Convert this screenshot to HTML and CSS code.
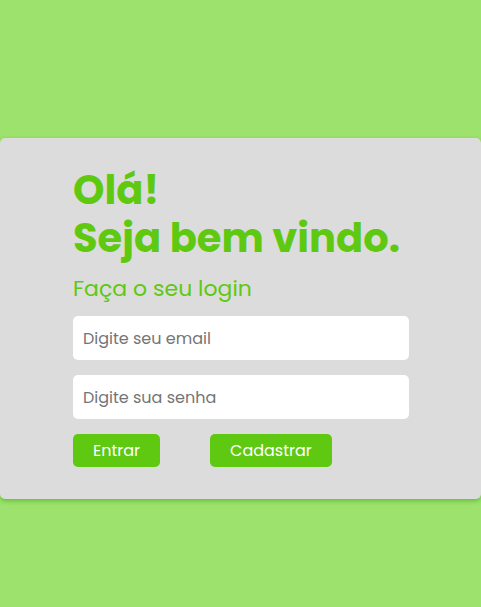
FILE: index.html
```html
<!DOCTYPE html>
<html lang="pt-BR">
<head>
<meta charset="utf-8">
<title>Login</title>
<link rel="stylesheet" href="styles.css">
</head>
<body>
<main class="page">
  <section class="card">
    <h1 class="title">Olá!<br>Seja bem vindo.</h1>
    <h2 class="subtitle">Faça o seu login</h2>
    <form class="form">
      <input class="field" type="email" placeholder="Digite seu email">
      <input class="field" type="password" placeholder="Digite sua senha">
      <div class="actions">
        <button class="btn" type="button">Entrar</button>
        <button class="btn" type="button">Cadastrar</button>
      </div>
    </form>
  </section>
</main>
</body>
</html>
```
FILE: styles.css
```css
* { box-sizing: border-box; }
html, body { margin: 0; padding: 0; }
body {
  background: #9ce26c;
  font-family: Poppins, "Open Sans", sans-serif;
  min-height: 100vh;
}
.page {
  padding-top: 138px;
}
.card {
  background: #dcdcdc;
  border-radius: 5px;
  box-shadow: 0 2px 4px rgba(40, 140, 0, 0.45);
  padding: 28px 72px 32px 73px;
}
.title {
  margin: 0;
  color: #5ec910;
  font-size: 40px;
  line-height: 48px;
  font-weight: 700;
}
.subtitle {
  margin: 12px 0 12px;
  color: #5ec910;
  font-size: 22px;
  line-height: 30px;
  font-weight: 400;
}
.form {
  display: flex;
  flex-direction: column;
  gap: 15px;
}
.field {
  width: 336px;
  height: 44px;
  border: none;
  border-radius: 5px;
  background: #fff;
  padding: 0 10px;
  font-family: inherit;
  font-size: 16px;
  outline: none;
}
.field::placeholder { color: #757575; }
.actions {
  display: flex;
  gap: 50px;
}
.btn {
  height: 33px;
  border: none;
  border-radius: 5px;
  background: #5ec910;
  color: #fff;
  font-family: inherit;
  font-size: 16px;
  padding: 0 20px;
}
```
